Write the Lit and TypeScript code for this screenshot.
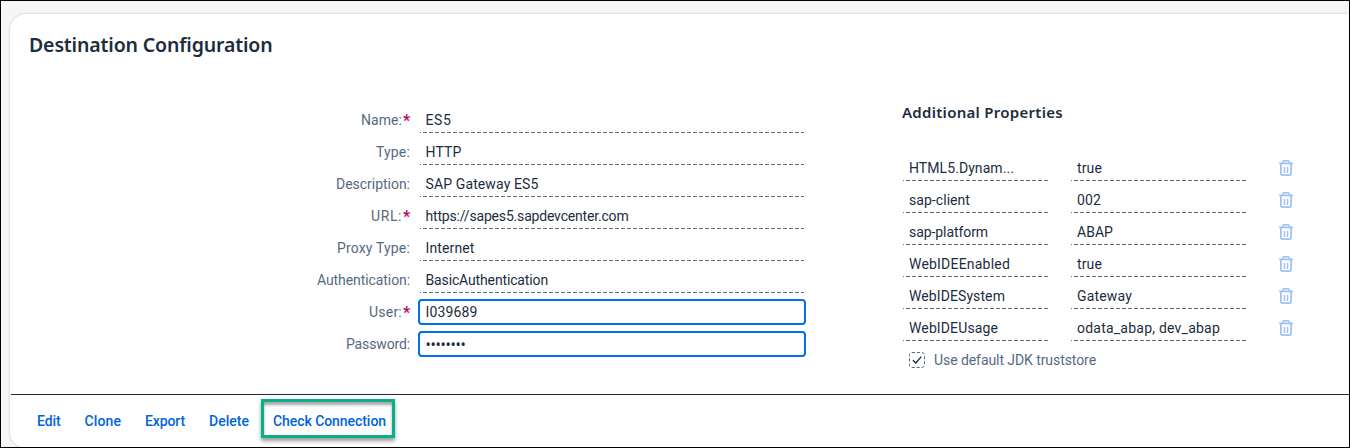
import { LitElement, html, css, svg } from "lit";
import { customElement, property } from "lit/decorators.js";

/** Text run whose tracking is set so that it fills a known advance width. */
@customElement("fit-text")
class FitText extends LitElement {
  @property({ type: Number }) w = 0;
  @property() text = "";
  static styles = css`
    :host { display: inline-block; white-space: pre; }
  `;
  render() {
    return html`<span>${this.text}</span>`;
  }
  updated() {
    const s = this.renderRoot.querySelector("span") as HTMLElement;
    const fit = () => {
      s.style.letterSpacing = "0px";
      const n = this.text.length;
      if (this.w && n) s.style.letterSpacing = (this.w - s.getBoundingClientRect().width) / n + "px";
    };
    fit();
    document.fonts.ready.then(fit);
  }
}

const fields: { label: string; lw: number; req?: boolean; value: string; w: number; edit?: boolean }[] = [
  { label: "Name:", lw: 41, req: true, value: "ES5", w: 26 },
  { label: "Type:", lw: 34, value: "HTTP", w: 36 },
  { label: "Description:", lw: 74, value: "SAP Gateway ES5", w: 113 },
  { label: "URL:", lw: 31, req: true, value: "https://sapes5.sapdevcenter.com", w: 203 },
  { label: "Proxy Type:", lw: 73, value: "Internet", w: 49 },
  { label: "Authentication:", lw: 93, value: "BasicAuthentication", w: 122.5 },
  { label: "User:", lw: 33, req: true, value: "I039689", w: 52, edit: true },
  { label: "Password:", lw: 64, value: "••••••••", w: 40, edit: true },
];

const props: [string, number, string, number][] = [
  ["HTML5.Dynam...", 105, "true", 25],
  ["sap-client", 61, "002", 24],
  ["sap-platform", 79, "ABAP", 36],
  ["WebIDEEnabled", 101, "true", 25],
  ["WebIDESystem", 96, "Gateway", 55],
  ["WebIDEUsage", 89, "odata_abap, dev_abap", 143],
];

const actions: [string, number][] = [
  ["Edit", 23.5],
  ["Clone", 36.5],
  ["Export", 40],
  ["Delete", 40],
  ["Check Connection", 113],
];

const trash = html`<svg class="trash" width="14" height="16" viewBox="0 0 14 16" fill="none">
  ${svg`<path d="M4 3V1.8Q4 .8 5 .8H9Q10 .8 10 1.8V3" stroke="currentColor" stroke-width="1.6"/>
  <path d="M0 3.4H14" stroke="currentColor" stroke-width="1.8"/>
  <path d="M1.9 4V13.7Q1.9 15.1 3.3 15.1H10.7Q12.1 15.1 12.1 13.7V4" stroke="currentColor" stroke-width="1.7"/>
  <path d="M5.5 7V13M8.5 7V13" stroke="currentColor" stroke-width="1.4"/>`}
</svg>`;

@customElement("app-root")
class AppRoot extends LitElement {
  static styles = css`
    :host {
      display: block; box-sizing: border-box; width: 1350px; height: 448px;
      border: 1px solid #000; background: #f5f6f7; overflow: hidden;
      padding: 13px 0 0 9px; font: 14px/32px Roboto, "Noto Sans", sans-serif;
    }
    *, *::after { box-sizing: border-box; }
    .card {
      width: 1380px; height: 434px; background: #fff; border-radius: 16px;
      box-shadow: 0 0 3px rgba(34, 53, 72, 0.22); display: flex; flex-direction: column;
      padding-left: 1px; color: #1d2d3e;
    }
    h1, h2 { margin: 0; font-family: "Noto Sans", sans-serif; font-weight: 600; line-height: 32px; }
    h1 { padding: 15px 0 0 18px; height: 90px; font-size: 19.5px; flex: none; }
    h2 { height: 32px; font-size: 15px; margin: -8px 0 24px; }
    .body { height: 290px; flex: none; display: grid; grid-template-columns: 399px 484px 1fr; }
    .label, .row { height: 32px; }
    .label { display: flex; justify-content: flex-end; color: #556b82; }
    .req { width: 8px; padding-left: 1px; color: #ba066c; font-weight: 700; font-size: 16px; line-height: 34px; }
    .row { display: flex; align-items: flex-start; padding: 3px 0 0 10px; }
    .val {
      height: 26px; line-height: 27px; padding-left: 5.5px;
      background: repeating-linear-gradient(90deg, #556b82 0 1px, transparent 1px 3px, #556b82 3px 6px) 0 25px / 100% 1px no-repeat;
    }
    .val.f { width: 384px; }
    .edit {
      margin-left: -2px; width: 388px; height: 26px; border: 2px solid #0070f2;
      border-radius: 4px; line-height: 23px; padding-left: 5.5px;
    }
    .dots { font-family: "Noto Sans", sans-serif; font-size: 14px; }
    .right { padding-left: 8px; }
    .prop { display: grid; grid-template-columns: 146px 176px 14px; column-gap: 22px; padding: 3px 0 0 1px; height: 32px; }
    .prop .val { padding-left: 6px; }
    .trash { color: #99c2f5; margin: 5px 0 0 10px; }
    .check { display: flex; align-items: center; gap: 9px; height: 32px; padding-left: 7px; color: #556b82; }
    footer {
      height: 54px; flex: none; border-top: 1px solid #1d2d3e; display: flex; gap: 24px;
      padding: 10px 0 0 26px; font-weight: 500; color: #0064d9;
    }
    .hl { position: relative; }
    .hl::after {
      content: ""; position: absolute; left: -12px; top: -6px; width: 134px; height: 39px;
      border: 3px solid #0bae8b; box-shadow: 0 3px 4px rgba(0, 0, 0, 0.4), inset 0 3px 3px rgba(0, 0, 0, 0.35);
    }
  `;
  render() {
    return html`<div class="card">
      <h1><fit-text .w=${243.5} text="Destination Configuration"></fit-text></h1>
      <div class="body">
        <div>${fields.map((f) => html`<div class="label"><fit-text .w=${f.lw} .text=${f.label}></fit-text>${f.req ? html`<span class="req">*</span>` : ""}</div>`)}</div>
        <div>${fields.map((f) => html`<div class="row"><div class="${f.edit ? "edit" : "val f"} ${f.label === "Password:" ? "dots" : ""}"><fit-text .w=${f.w} .text=${f.value}></fit-text></div></div>`)}</div>
        <div class="right">
          <h2><fit-text .w=${161} text="Additional Properties"></fit-text></h2>
          ${props.map(([k, kw, v, vw]) => html`<div class="prop">
            <div class="val"><fit-text .w=${kw} .text=${k}></fit-text></div>
            <div class="val"><fit-text .w=${vw} .text=${v}></fit-text></div>
            ${trash}
          </div>`)}
          <div class="check">
            <svg width="16" height="16" viewBox="0 0 16 16" fill="none">
              <rect x=".5" y=".5" width="15" height="15" rx="2.5" stroke="#556b82" stroke-dasharray="3 2" />
              <path d="M4 8.2L6.8 11L12.3 4.6" stroke="#1d2d3e" stroke-width="1.4" />
            </svg>
            <fit-text .w=${162} text="Use default JDK truststore"></fit-text>
          </div>
        </div>
      </div>
      <footer>${actions.map(([a, w], i) => html`<span class=${i === 4 ? "hl" : ""}><fit-text .w=${w} .text=${a}></fit-text></span>`)}</footer>
    </div>`;
  }
}
